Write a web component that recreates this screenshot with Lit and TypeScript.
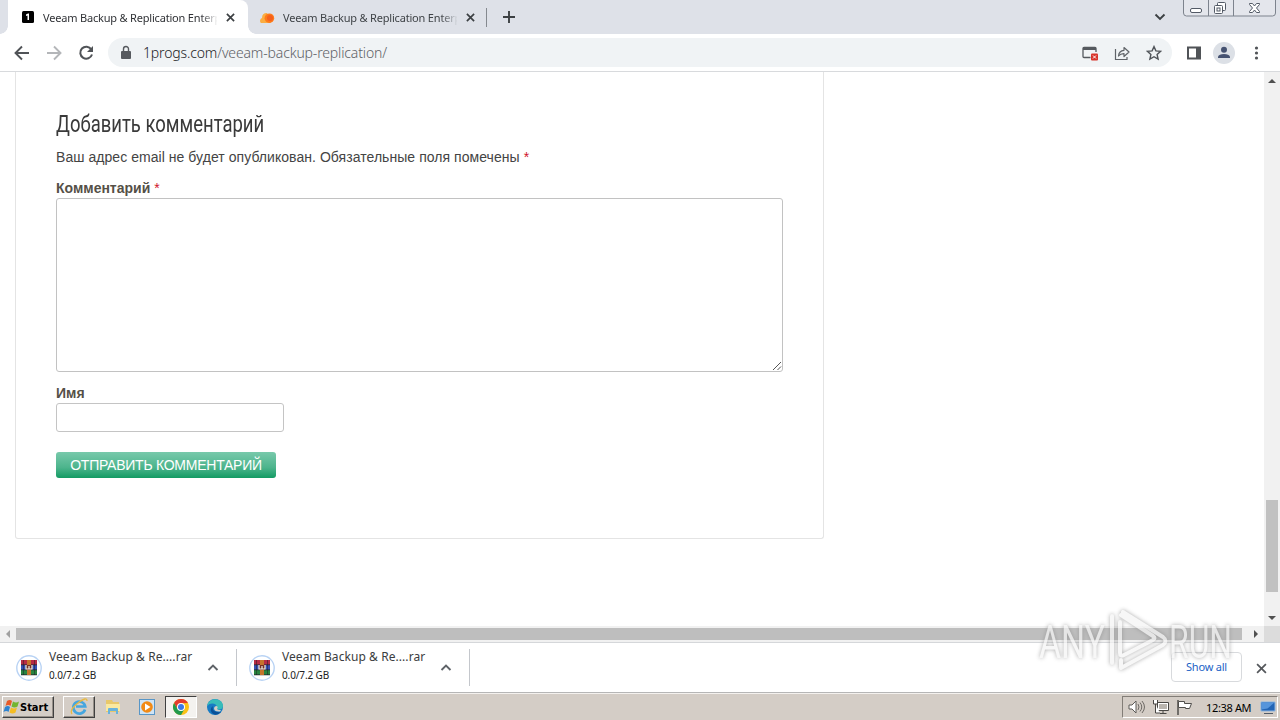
import { LitElement, html, css, svg } from "lit";
import { customElement, property } from "lit/decorators.js";

const closeIcon = (s: number, w: number, c: string) => html`<svg width=${s} height=${s} viewBox="0 0 10 10"><path d="M1 1 9 9M9 1 1 9" stroke=${c} stroke-width=${w} fill="none"/></svg>`;

@customElement("browser-tab")
class BrowserTab extends LitElement {
  @property({ type: Boolean, reflect: true }) active = false;
  static styles = css`
    :host { display: flex; align-items: center; height: 34px; width: 240px; box-sizing: border-box; padding: 0 11px 0 12px; position: relative; color: #3f4347; }
    :host([active]) { background: #fff; border-radius: 0 8px 0 0; color: #303236; }
    :host([active])::before, :host([active])::after { content: ""; position: absolute; bottom: 0; width: 8px; height: 8px; }
    :host([active])::before { left: -8px; background: radial-gradient(circle at 0 0, transparent 7.5px, #fff 8px); }
    :host([active])::after { right: -8px; background: radial-gradient(circle at 100% 0, transparent 7.5px, #fff 8px); }
    .title { width: 174px; margin-left: 7px; font: 11px "Noto Sans", sans-serif; letter-spacing: -0.19px; white-space: nowrap; overflow: hidden; mask-image: linear-gradient(90deg, #000 158px, transparent 175px); }
    .close { margin-left: 9px; display: flex; }
    .fav { width: 16px; height: 16px; }
  `;
  render() {
    return html`
      ${this.active
        ? html`<svg class="fav" viewBox="0 0 16 16"><rect x="2" y="2" width="12" height="12" rx="1.5"/><path d="M6 5.5 8 4.5h1V11H7.5V6.5L6 7z" fill="#fff"/></svg>`
        : html`<svg class="fav" viewBox="0 0 16 16"><path d="M1 14a3 3 0 0 1 1-5Q2 4 7 4l4 10z" fill="#fbad41"/><circle cx="9.4" cy="9.2" r="4.8" fill="#ff7a1a"/><circle cx="10" cy="9" r="3" fill="#f4601d"/></svg>`}
      <span class="title">Veeam Backup &amp; Replication Enterprise</span>
      <span class="close">${closeIcon(9, 1.9, "#3c4043")}</span>`;
  }
}

@customElement("download-item")
class DownloadItem extends LitElement {
  static styles = css`
    :host { display: flex; width: 233px; height: 37px; box-sizing: border-box; border-right: 1px solid #c4c7cc; position: relative; }
    .icon { width: 26px; height: 26px; margin: 6px 0 0 12px; flex: none; }
    .text { width: 155px; margin-left: 7px; color: #3b3d40; white-space: nowrap; }
    .name { font: 12px/16px "Noto Sans", sans-serif; letter-spacing: 0.07px; }
    .size { font: 10px/14px "Noto Sans", sans-serif; margin-top: 3px; color: #222; letter-spacing: -0.12px; }
    .chev { margin: 14px 0 0 3px; width: 12px; height: 9px; }
  `;
  render() {
    return html`
      <svg class="icon" viewBox="0 0 26 26"><circle cx="13" cy="13" r="12.2" fill="#fff" stroke="#b9d3f4" stroke-width="1.4"/>
        <rect x="5" y="5" width="16" height="5" fill="#b52b46"/><rect x="5" y="10" width="16" height="5" fill="#3651b5"/><rect x="5" y="15" width="16" height="5" fill="#288441"/>
        <path d="M5 9.8h16M5 14.8h16M5 19.8h16" stroke="#252735" stroke-width=".8"/><path d="M7.5 5v15M18.5 5v15" stroke="#191b22" stroke-opacity=".45"/>
        <rect x="11" y="5" width="4" height="15" fill="#c5742c"/><rect x="10" y="10" width="6" height="5" fill="#743028"/><path d="M10 10v4h6v-4M13 11v3" stroke="#f1efe1" stroke-width="1.2" fill="none"/>
      </svg>
      <div class="text"><div class="name">Veeam Backup &amp; Re....rar</div><div class="size">0.0/7.2 GB</div></div>
      <svg class="chev" viewBox="0 0 12 9"><path d="M1.5 7 6 2.5 10.500 7" stroke="#5f6368" stroke-width="1.9" fill="none"/></svg>`;
  }
}

const arrow = (d: string, c = "#505050") => html`<svg width="16" height="16" viewBox="0 0 16 16"><path d=${d} fill=${c}/></svg>`;

@customElement("app-root")
class AppRoot extends LitElement {
  static styles = css`
    :host { display: flex; flex-direction: column; width: 1280px; height: 720px; position: relative; overflow: hidden; background: #fff; }
    svg { display: block; flex: none; }
    .strip { height: 34px; background: #dee1e8; display: flex; padding-left: 8px; flex: none; }
    .sep { width: 1px; height: 19px; background: #85898f; margin: 8px 16px 0 -2px; }
    .plus { margin-top: 11px; }
    .down { margin: 13px 17px 0 auto; }
    .win { width: 93px; height: 17px; margin-right: 4px; }
    .bar { height: 37px; display: flex; align-items: center; border-bottom: 1px solid #d8dadd; flex: none; }
    .nav { display: flex; gap: 16px; padding-left: 14px; width: 94px; }
    .pill { height: 29px; width: 1064px; box-sizing: border-box; border-radius: 15px; background: #f0f3f5; display: flex; align-items: center; padding: 0 10px 0 10px; }
    .url { margin-left: 9px; font: 14px "Noto Sans", sans-serif; font-weight: 300; letter-spacing: -0.15px; color: #5d6166; flex: 1; white-space: nowrap; }
    .url b { color: #202124; font-weight: 300; }
    .acts { display: flex; gap: 16px; }
    .right { display: flex; gap: 11px; align-items: center; padding-left: 14px; }
    .view { display: flex; height: 554px; flex: none; }
    .page { width: 1264px; padding-left: 15px; box-sizing: border-box; }
    .card { width: 809px; height: 467px; box-sizing: border-box; border: 1px solid #e4e4e4; border-top: 0; border-radius: 0 0 3px 3px; padding: 34px 40px 0; color: #444; font: 14px/20px "Liberation Sans", sans-serif; }
    h3 { margin: 0; font: 400 24px/36px Roboto, sans-serif; color: #3a3a3a; width: 310px; white-space: nowrap; transform: scaleX(.77); transform-origin: 0 0; }
    .note { margin-top: 5px; white-space: nowrap; letter-spacing: 0.05px; }
    .req { color: #d0142c; }
    .lab { font-weight: 700; color: #555047; display: block; height: 20px; }
    .lab .req { font-weight: 400; }
    .c { margin-top: 11px; }
    .area { position: relative; height: 174px; width: 727px; box-sizing: border-box; border: 1px solid #c2c2c2; border-radius: 3px; }
    .grip { position: absolute; right: 0; bottom: 0; }
    .n { margin-top: 11px; }
    .input { height: 29px; width: 228px; box-sizing: border-box; border: 1px solid #c4c4c4; border-radius: 3px; }
    .btn { margin-top: 20px; height: 26px; width: 220px; border-radius: 3px; box-sizing: border-box; background: linear-gradient(#78c9ab, #4cb48c 60%, #139b63); color: #fff; text-align: center; font: 14px/26px "Liberation Sans", sans-serif; white-space: nowrap; }
    .btn span { letter-spacing: -0.25px; }
    .vs { width: 16px; background: #f1f1f1; display: flex; flex-direction: column; align-items: center; }
    .vthumb { width: 12px; height: 92px; background: #c1c1c1; margin-top: 412px; margin-bottom: 17px; }
    .hs { height: 16px; background: #f1f1f1; display: flex; align-items: center; flex: none; }
    .hthumb { width: 1226px; height: 12px; background: #bebebe; margin-right: 6px; }
    .corner { width: 16px; height: 16px; background: #dcdcdc; }
    .shelf { height: 51px; box-sizing: border-box; border-top: 1px solid #d5d7da; border-bottom: 1px solid #b6b6b6; background: #fff; display: flex; padding: 6px 13px 0 4px; flex: none; }
    .show { margin: 3px 14px 0 auto; width: 69px; height: 28px; border: 1px solid #d8dadd; border-radius: 4px; text-align: center; font: 11px/27px "Noto Sans", sans-serif; letter-spacing: -0.2px; color: #1a62c5; background: #fff; }
    .x { margin-top: 14px; }
    .task { height: 27px; box-sizing: border-box; background: #d4cdc6; border-top: 1px solid #f4f1ee; display: flex; align-items: center; padding-left: 2px; font: 11px "Noto Sans", sans-serif; color: #000; }
    .start { width: 52px; height: 22px; box-sizing: border-box; border: 1px solid #fff; border-right-color: #404040; border-bottom-color: #404040; box-shadow: inset -1px -1px #969089; display: flex; align-items: center; font: 700 11px "DejaVu Sans Condensed", "DejaVu Sans", sans-serif; margin-right: 9px; }
    .app { width: 32px; height: 22px; box-sizing: border-box; border: 1px solid transparent; display: grid; place-items: center; margin-right: 2px; }
    .up { border-color: #fff #404040 #404040 #fff; box-shadow: inset -1px -1px #969089; }
    .in { border-color: #404040 #fff #fff #404040; background: #f4f2ef; }
    .tray { margin-left: auto; margin-right: 2px; width: 156px; height: 22px; box-sizing: border-box; border: 1px solid; border-color: #827d77 #fff #fff #827d77; display: flex; align-items: center; padding-left: 5px; gap: 7px; }
    .clock { margin-left: 6px; width: 47px; white-space: nowrap; letter-spacing: -0.35px; }
    .mark { position: absolute; left: 1030px; top: 600px; filter: drop-shadow(0 0 2px #8a8a8a); opacity: .72; }
  `;

  private chrome() {
    return html`<svg width="16" height="16" viewBox="0 0 16 16"><circle cx="8" cy="8" r="8" fill="#fbc116"/><path d="M1.070 4A8 8 0 0 1 14.930 4L8 4.300 4.540 10z" fill="#e33b2e"/><path d="M1.070 4A8 8 0 0 0 8 16L11.500 10H4.540z" fill="#229a4d"/><circle cx="8" cy="8" r="4" fill="#fff"/><circle cx="8" cy="8" r="3" fill="#3b78e7"/></svg>`;
  }

  render() {
    return html`
      <div class="strip">
        <browser-tab active></browser-tab><browser-tab></browser-tab>
        <div class="sep"></div>
        <svg class="plus" width="12" height="12" viewBox="0 0 12 12"><path d="M6 0v12M0 6h12" stroke="#3c4043" stroke-width="1.9"/></svg>
        <svg class="down" width="12" height="9" viewBox="0 0 12 9"><path d="M1.500 1.500 6 6l4.500-4.500" stroke="#3c4043" stroke-width="1.9" fill="none"/></svg>
        <svg class="win" viewBox="0 0 93 17"><path d="M.5 0v13q0 3 3 3h86q3 0 3-3V0M25.500 0v16M50.500 0v16" fill="#e4e6ec" stroke="#7d838d"/><g fill="#fff" stroke="#535a66"><rect x="7.500" y="8.500" width="11" height="4" rx="1.500"/><rect x="34.500" y="2.500" width="8" height="8" rx="1"/><rect x="31.500" y="5.500" width="8" height="8" rx="1"/><rect x="34" y="8" width="3" height="3"/><path d="M66.500 3.500h3l2 2.500 2-2.500h3v1L73.500 8l3 3.500v1h-3l-2-2.500-2 2.500h-3v-1l3-3.500-3-3.500z"/></g></svg>
      </div>
      <div class="bar">
        <div class="nav">
          <svg width="16" height="16" viewBox="0 0 16 16"><path d="M15 8H2M8 1.500 1.500 8 8 14.500" fill="none" stroke="#505357" stroke-width="1.9"/></svg>
          <svg width="16" height="16" viewBox="0 0 16 16"><path d="M1 8h13M8 1.500 14.500 8 8 14.500" fill="none" stroke="#b4b6b9" stroke-width="1.900"/></svg>
          <svg width="16" height="16" viewBox="0 0 16 16"><path d="M13.300 4.400A6 6 0 1 0 14 9.500" fill="none" stroke="#505357" stroke-width="2"/><path d="M15 1v6H9z" fill="#505357"/></svg>
        </div>
        <div class="pill">
          <svg width="16" height="16" viewBox="0 0 16 16"><path d="M4 6h8q1 0 1 1v6q0 1-1 1H4q-1 0-1-1V7q0-1 1-1z" fill="#56595e"/><path d="M5.500 6V4a2.500 2.500 0 0 1 5 0v2" fill="none" stroke="#56595e" stroke-width="1.400"/></svg>
          <span class="url"><b>1progs.com</b>/veeam-backup-replication/</span>
          <div class="acts">
            <svg width="16" height="16" viewBox="0 0 16 16"><path d="M8.500 12.500H2q-1 0-1-1V3.500q0-1 1-1h11q1 0 1 1V7" fill="none" stroke="#55595e" stroke-width="1.300"/><path d="M1 2h13v3H1z" fill="#55595e"/><rect x="9" y="8.500" width="7" height="7" rx="1" fill="#d8342b"/><path d="m11 10.500 3 3m0-3-3 3" stroke="#fff"/></svg>
            <svg width="16" height="16" viewBox="0 0 16 16"><path d="M1.500 4v10.500H13V12" fill="none" stroke="#5f6368" stroke-width="1.200"/><path d="M4.500 11Q5 5.500 10 5.300V2.500L15 7l-5 4.500V8.600Q6.500 8.500 4.500 11z" fill="none" stroke="#5f6368" stroke-width="1.200" stroke-linejoin="round"/></svg>
            <svg width="16" height="16" viewBox="0 0 16 16"><path d="m8 1.600 1.900 4.300 4.700.45-3.500 3.150 1 4.600L8 11.700l-4.100 2.400 1-4.600L1.400 6.350l4.700-.45z" fill="none" stroke="#505459" stroke-width="1.400"/></svg>
          </div>
        </div>
        <div class="right">
          <svg width="16" height="16" viewBox="0 0 16 16"><path d="M1 1.500h14v13H1zM3 3.500v9h7v-9z" fill="#505357" fill-rule="evenodd"/></svg>
          <svg width="22" height="22" viewBox="0 0 22 22"><circle cx="11" cy="11" r="11" fill="#dce0e6"/><circle cx="11" cy="7.800" r="3" fill="#465271"/><path d="M5 16v-1.500Q6 12 11 12t6 2.500V16z" fill="#465271"/></svg>
          <svg width="20" height="16" viewBox="0 0 20 16"><g fill="#505357"><circle cx="10.500" cy="3" r="1.600"/><circle cx="10.500" cy="8" r="1.600"/><circle cx="10.500" cy="13" r="1.600"/></g></svg>
        </div>
      </div>
      <div class="view">
        <div class="page"><div class="card">
          <h3>Добавить комментарий</h3>
          <div class="note">Ваш адрес email не будет опубликован. Обязательные поля помечены <span class="req">*</span></div>
          <span class="lab c">Комментарий <span class="req">*</span></span>
          <div class="area"><svg class="grip" width="10" height="10" viewBox="0 0 10 10"><path d="M1 9 9 1M5.500 9 9 5.500" stroke="#555"/></svg></div>
          <span class="lab n">Имя</span>
          <div class="input"></div>
          <div class="btn"><span>ОТПРАВИТЬ КОММЕНТАРИЙ</span></div>
        </div></div>
        <div class="vs">${arrow("M4 11h8L8 7z")}<div class="vthumb"></div>${arrow("M4 7h8l-4 4z")}</div>
      </div>
      <div class="hs">${arrow("M10 4v8L6 8z", "#a0a0a0")}<div class="hthumb"></div>${arrow("M6 4v8l4-4z")}<div class="corner"></div></div>
      <div class="shelf">
        <download-item></download-item><download-item></download-item>
        <div class="show">Show all</div>
        <div class="x">${closeIcon(11, 1.6, "#55585c")}</div>
      </div>
      <div class="task">
        <div class="start"><svg width="17" height="18" viewBox="0 0 17 18"><path d="M4 3q3-2 5 0L7.500 8q-2-2-5 0z" fill="#e85a27"/><path d="M10 3.500q3 2 6 0L14.500 8.500q-3 2-6 0z" fill="#73b52f"/><path d="M2 9q3-2 5 0l-1.500 5q-2-2-5 0z" fill="#2e83d0"/><path d="M8 9.500q3 2 6 0l-1.500 5q-3 2-6 0z" fill="#f5bd23"/></svg>Start</div>
        <div class="app up"><svg width="18" height="18" viewBox="0 0 18 18"><path d="M15 11.500a6 6 0 1 1 .2-3H6" fill="none" stroke="#45a6df" stroke-width="2.700"/><path d="M2 16Q-1 12 8 5t9-2" fill="none" stroke="#e8b940" stroke-width="1.300"/></svg></div>
        <div class="app"><svg width="18" height="18" viewBox="0 0 18 18"><path d="M2 2h6l1 2h6v10H2z" fill="#e8c86b"/><path d="M2 6h14v7H2z" fill="#fae9a0"/><path d="M4 16V11q0-1 1-1h8q1 0 1 1v5h-2v-3H6v3z" fill="#69b3dc"/></svg></div>
        <div class="app"><svg width="18" height="18" viewBox="0 0 18 18"><rect x="1.500" y="1.500" width="15" height="15" fill="#cfe4f5" stroke="#5896c7"/><circle cx="9" cy="9" r="5.800" fill="#f28a15"/><path d="m7 5.500 5.500 3.500L7 12.500z" fill="#fff"/></svg></div>
        <div class="app in">${this.chrome()}</div>
        <div class="app"><svg width="16" height="16" viewBox="0 0 16 16"><circle cx="8" cy="8" r="8" fill="#177bc4"/><path d="M.3 7C1-2 15-2 16 6.500q0 4-4 4-3 0-2-2C10 4 3 3 .3 7z" fill="#38bcb9"/><path d="M6 7q-2 7 8 6Q9 18 5 14 2 10 6 7z" fill="#0b5097"/><path d="M9.500 7q2 1 .5 2.500.5 2 4 1.500l-1 1.500Q7 13 7 9q.5-2 2.500-2z" fill="#d4cdc6"/></svg></div>
        <div class="tray">
          <svg width="17" height="16" viewBox="0 0 17 16"><path d="M1 6h3l4-4v12l-4-4H1z" fill="#fff" stroke="#5c5a57"/><path d="M10 5q2 3 0 6M12 3.500q3.500 4.500 0 9M14 2q5 6 0 12" fill="none" stroke="#6e6a66"/></svg>
          <svg width="17" height="16" viewBox="0 0 17 16"><path d="M5.500 3.500h11v8h-11zM8 14.500h6.500M11 12v2" fill="#fff" stroke="#494744"/><rect x="7" y="5" width="8" height="5" fill="#b9b4ae"/><path d="M1.500 1v4h4V1M3.500 5v9H8" fill="#fff" stroke="#494744"/></svg>
          <svg width="17" height="16" viewBox="0 0 17 16"><path d="M2 1v15" stroke="#504e4b" stroke-width="1.500"/><path d="M2.500 2.500h6v2h7l-2 5h-4v-1h-7z" fill="#fff" stroke="#504e4b"/></svg>
          <span class="clock">12:38 AM</span>
          <svg width="16" height="16" viewBox="0 0 16 16"><path d="M1 3h14v9H1z" fill="#2365b5" stroke="#8db5df"/><path d="M1.500 3.500h13l-7 6-6 1z" fill="#5695db"/><path d="M4 14.500h9" stroke="#515b68"/></svg>
        </div>
      </div>
      <svg class="mark" width="210" height="84" viewBox="0 0 210 84">
        ${svg`<g fill="#f4f4f4" font-family="Roboto, sans-serif" font-weight="400" font-size="47"><text x="9" y="58" textLength="66" lengthAdjust="spacingAndGlyphs">ANY</text><text x="139" y="58" textLength="63" lengthAdjust="spacingAndGlyphs">RUN</text></g>
        <path d="M82 16v47M90 22v31q0 4 4 2l29-15q3-2 0-4L91 15M91 68v-8M91 68l42-23q5-4 0-8L93 12" fill="none" stroke="#f4f4f4" stroke-width="4" stroke-linejoin="round" stroke-linecap="round"/>`}
      </svg>`;
  }
}
